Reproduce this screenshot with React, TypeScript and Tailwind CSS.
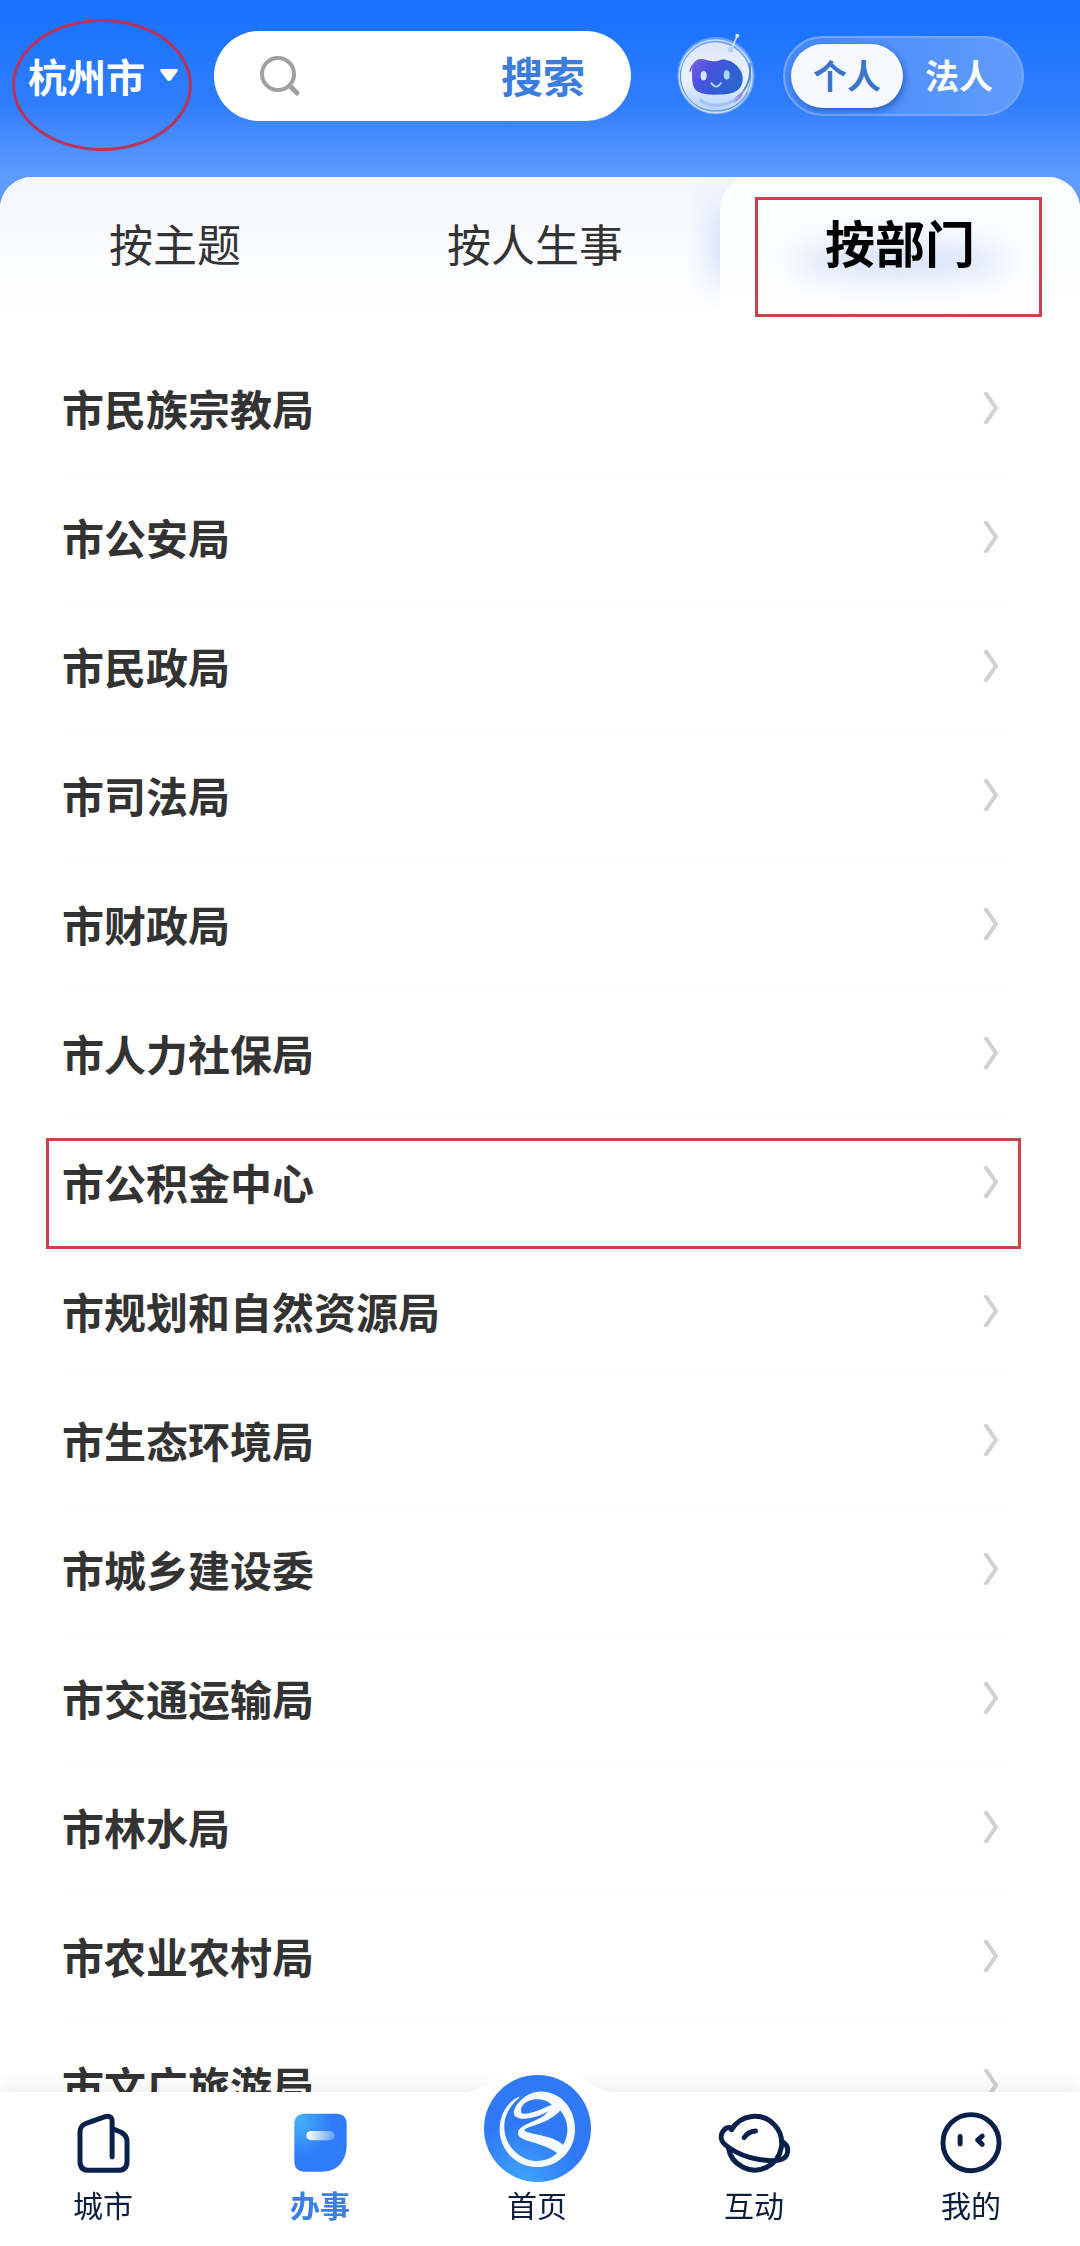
import { useState } from 'react'

const departments = [
    '市民族宗教局',
    '市公安局',
    '市民政局',
    '市司法局',
    '市财政局',
    '市人力社保局',
    '市公积金中心',
    '市规划和自然资源局',
    '市生态环境局',
    '市城乡建设委',
    '市交通运输局',
    '市林水局',
    '市农业农村局',
    '市文广旅游局',
]

const MARKED = '市公积金中心'

const Robot = () => (
    <svg viewBox="50 98 240 250" className="h-[84px] w-20" aria-hidden="true">
        <defs>
            <linearGradient id="shell" x1="0" y1="0" x2="0" y2="1">
                <stop offset="0" stopColor="#dfe6fb" />
                <stop offset="0.55" stopColor="#e9f3ff" />
                <stop offset="1" stopColor="#b4d2fb" />
            </linearGradient>
            <linearGradient id="visor" x1="0" y1="0" x2="1" y2="0.5">
                <stop offset="0" stopColor="#7a5fe0" />
                <stop offset="0.4" stopColor="#4552dd" />
                <stop offset="1" stopColor="#2a66cf" />
            </linearGradient>
        </defs>
        <circle cx="170" cy="228" r="116" fill="#8fb9fb" opacity="0.65" />
        <circle cx="168" cy="232" r="104" fill="url(#shell)" />
        <circle cx="169" cy="230" r="109" fill="none" stroke="#c6defc" strokeWidth="5" />
        <path d="M65 210 C55 270 95 330 165 334 C215 334 250 310 265 280" fill="none" stroke="#5c8fd6" strokeWidth="3" />
        <path d="M271 190 C276 225 270 250 252 275" fill="none" stroke="#4d7fd0" strokeWidth="5" />
        <path d="M222 310 C240 302 252 288 256 268 L232 290 Z" fill="#a58ae8" />
        <path d="M120 300 C150 325 205 322 235 292" fill="none" stroke="#8db5ee" strokeWidth="9" opacity="0.6" />
        <path d="M98 215 C98 180 118 175 140 180 C160 186 170 186 185 180 C215 176 248 205 250 232 C252 262 235 280 200 284 C165 287 125 286 110 272 C98 258 98 240 98 215 Z" fill="url(#visor)" />
        <path d="M92 216 C95 200 104 190 116 186" fill="none" stroke="#7a5fe0" strokeWidth="5" />
        <ellipse cx="133" cy="228" rx="9" ry="14" fill="#d9e8ff" />
        <ellipse cx="202" cy="226" rx="9" ry="14" fill="#a9d8ff" />
        <path d="M156 250 Q170 272 185 250" fill="none" stroke="#bcd9ff" strokeWidth="5" strokeLinecap="round" />
        <path d="M216 148 L233 110" stroke="#cfe0fb" strokeWidth="5" />
        <circle cx="234" cy="108" r="6" fill="#dbe8ff" />
        <circle cx="214" cy="150" r="8" fill="#b9cdf7" />
    </svg>
)

const CityIcon = () => (
    <svg viewBox="226 216 160 184" className="h-[61px] w-[53px]" fill="none" stroke="#08204a" strokeWidth="15" strokeLinecap="round" strokeLinejoin="round" aria-hidden="true">
        <path d="M332 349 V240 C332 228 322 223 311 227 L254 247 C241 252 235 261 235 273 V362 Q235 389 262 389 H350 Q377 389 377 362 V302 C377 286 370 280 359 274 L338 265" />
    </svg>
)

const WorkIcon = () => (
    <svg viewBox="878 216 160 184" className="h-[61px] w-[53px]" aria-hidden="true">
        <defs>
            <radialGradient id="work" cx="0.12" cy="0.15" r="0.6">
                <stop offset="0" stopColor="#43b0f8" />
                <stop offset="1" stopColor="#2f7bfa" />
            </radialGradient>
            <linearGradient id="dash" x1="0" y1="0" x2="1" y2="0">
                <stop offset="0" stopColor="#ffffff" />
                <stop offset="1" stopColor="#ffffff" stopOpacity="0.25" />
            </linearGradient>
        </defs>
        <path d="M911 218 H1006 Q1037 218 1037 249 V310 C1037 360 1010 393 960 393 H911 Q879 393 879 361 V250 Q879 218 911 218 Z" fill="url(#work)" />
        <rect x="915" y="270" width="86" height="28" rx="14" fill="url(#dash)" />
    </svg>
)

const HomeIcon = () => (
    <svg viewBox="250 105 322 322" className="size-[107px] shrink-0" aria-hidden="true">
        <defs>
            <radialGradient id="home" cx="0.35" cy="1" r="0.55">
                <stop offset="0" stopColor="#3fa5fa" />
                <stop offset="1" stopColor="#3079f6" />
            </radialGradient>
        </defs>
        <circle cx="411" cy="266" r="161" fill="url(#home)" />
        <path
            fill="#f4faff"
            fillRule="evenodd"
            d="M356 170 C320 186 297 226 297 268 C297 332 348 382 411 382 C474 382 524 332 524 268 C524 205 480 155 420 155 C375 155 336 200 340 222 C346 244 400 240 442 215 C424 245 354 250 352 280 C354 308 425 304 470 340 C440 370 385 374 346 338 C300 296 296 222 356 174 Z M364 221 C354 200 378 178 410 178 C430 178 448 187 454 195 C432 200 400 224 364 221 Z M480 212 C506 245 507 285 488 315 C455 286 395 286 371 273 C374 258 440 256 480 212 Z"
        />
    </svg>
)

const PlanetIcon = () => (
    <svg viewBox="110 212 220 184" className="h-[61px] w-[73px]" fill="none" stroke="#08204a" strokeWidth="15" strokeLinecap="round" strokeLinejoin="round" aria-hidden="true">
        <path d="M151 262 A81 81 0 1 1 141 316" />
        <path d="M151 262 C152 252 134 253 125 267 C116 280 118 297 133 309 C170 340 235 362 294 354 C326 348 328 312 303 298" />
        <path d="M189 286 Q200 268 223 266" />
    </svg>
)

const FaceIcon = () => (
    <svg viewBox="779 216 188 188" className="size-[62px]" fill="none" stroke="#08204a" strokeWidth="15" strokeLinecap="round" strokeLinejoin="round" aria-hidden="true">
        <circle cx="873" cy="309" r="85" />
        <path d="M840 290 V313 M907 289 L893 301 L907 314" />
    </svg>
)

const navItems = [
    { label: '城市', icon: <CityIcon /> },
    { label: '办事', icon: <WorkIcon /> },
    { label: '首页', icon: <HomeIcon /> },
    { label: '互动', icon: <PlanetIcon /> },
    { label: '我的', icon: <FaceIcon /> },
]

const tabs = ['按主题', '按人生事', '按部门']

const App = () => {
    const [keyword, setKeyword] = useState('')
    const [role, setRole] = useState('个人')
    const [tab, setTab] = useState('按部门')

    return (
        <div className="min-h-screen overflow-x-hidden bg-white font-['Noto_Sans_CJK_SC',sans-serif] text-[#333]">
            <header className="flex h-[205px] items-start bg-linear-to-b from-[#1a73ff] from-10% via-[#2f7dfd] via-50% to-[#609cff] to-88% pt-[31px] pl-7">
                <button className="relative flex h-[90px] w-[186px] shrink-0 items-center gap-[14px] pb-[2px] text-[39px] leading-none font-bold text-white">
                    杭州市
                    <svg viewBox="0 0 20 14" className="h-[14px] w-5" aria-hidden="true">
                        <path d="M3 1 H17 Q20 1 18 4 L12 12 Q10 14 8 12 L2 4 Q0 1 3 1 Z" fill="#fff" />
                    </svg>
                    <span className="absolute -top-3 -left-4 h-[132px] w-[180px] rounded-[50%] border-3 border-[#b8325c]"></span>
                </button>

                <form className="flex h-[90px] min-w-0 flex-1 items-center rounded-full bg-white pr-[46px] pl-[45px]" onSubmit={(e) => e.preventDefault()}>
                    <svg viewBox="0 0 42 42" className="size-[42px] shrink-0" fill="none" stroke="#a0a0a0" strokeWidth="4" strokeLinecap="round" aria-hidden="true">
                        <circle cx="19" cy="19" r="16" />
                        <path d="M31 31 L38 38" strokeWidth="5" />
                    </svg>
                    <input type="text" aria-label="搜索" value={keyword} onChange={(e) => setKeyword(e.target.value)} className="mx-4 min-w-0 flex-1 text-[36px] outline-none" />
                    <button type="submit" className="shrink-0 pb-[2px] text-[42px] leading-none font-bold text-[#3b7cdc]">搜索</button>
                </form>

                <button className="mt-[1px] ml-[45px] shrink-0" aria-label="智能客服">
                    <Robot />
                </button>

                <div className="mt-[5px] mr-14 ml-[27px] flex h-20 w-[241px] shrink-0 items-center rounded-full border-2 border-[#74a7fc] bg-linear-to-r from-[#4488fb] to-[#609cfa] pl-[6px]">
                    {['个人', '法人'].map((r) => (
                        <button
                            key={r}
                            onClick={() => setRole(r)}
                            className={role === r
                                ? 'h-16 w-[112px] rounded-full bg-[#f5f8ff] pb-[2px] text-[34px] leading-none font-bold text-[#3b74c8] shadow-[2px_3px_6px_#2b62c4]'
                                : 'h-16 w-[112px] pb-[2px] text-[34px] leading-none font-bold text-white'}
                        >
                            {r}
                        </button>
                    ))}
                </div>
            </header>

            <main className="relative -mt-7 overflow-hidden rounded-t-[32px] bg-white">
                <div className="bg-linear-to-b from-[#f3f7fe] to-white to-80% pb-9">
                    <div role="tablist" className="grid grid-cols-[35fr_37fr_36fr]">
                        {tabs.map((t) => (
                            <button
                                key={t}
                                role="tab"
                                aria-selected={tab === t}
                                onClick={() => setTab(t)}
                                className={tab === t
                                    ? 'relative h-[131px] pb-[4px] text-[50px] leading-none font-bold text-black'
                                    : 'h-[131px] text-[44px] leading-none'}
                            >
                                {tab === t && (
                                    <>
                                        <span className="absolute inset-y-0 -left-8 w-16 bg-linear-to-l from-[#d9e4fa] from-40% to-transparent mask-y-from-60%"></span>
                                        <span className="absolute inset-0 rounded-t-[32px] bg-linear-to-b from-[#fafdff] to-white"></span>
                                        <span className="absolute top-[68px] left-1/2 h-8 w-[220px] -translate-x-1/2 rounded-[50%] bg-[#cfdcf8] blur-lg"></span>
                                    </>
                                )}
                                <span className="relative">{t}</span>
                                {t === '按部门' && <span className="absolute top-5 right-[38px] left-[35px] h-[120px] border-3 border-[#c8434a]"></span>}
                            </button>
                        ))}
                    </div>
                </div>

                <ul>
                    {departments.map((name) => (
                        <li key={name} className="relative mr-[72px] ml-[62px] border-b border-[#fcfcfc]">
                            <a href="#" className="flex h-32 items-center justify-between pr-[8px] text-[42px] leading-none font-bold">
                                {name}
                                <svg viewBox="0 0 18 32" className="h-8 w-[18px]" fill="none" stroke="#cdd2d4" strokeWidth="4" aria-hidden="true">
                                    <path d="M3 0 L14 16 L3 32" />
                                </svg>
                            </a>
                            {name === MARKED && <span className="absolute top-[20px] -right-[13px] -left-4 h-[111px] border-3 border-[#c8434a]"></span>}
                        </li>
                    ))}
                </ul>
            </main>

            <nav className="fixed inset-x-0 bottom-0 bg-white shadow-[0_-4px_20px_rgba(0,0,0,0.08)]">
                <svg viewBox="0 0 180 40" className="absolute -top-[29px] left-1/2 h-10 w-[180px] -translate-x-1/2" aria-hidden="true">
                    <path d="M0 30 C30 30 34 22 46 14 C60 4 74 0 88 0 C102 0 116 4 130 14 C142 22 150 30 180 30 V40 H0 Z" fill="#fff" />
                </svg>
                <ul className="relative flex justify-between pr-[71px] pl-[65px]">
                    {navItems.map((item) => (
                        <li key={item.label} className="w-[76px]">
                            <a href="#" className={item.label === '办事' ? 'flex h-[154px] flex-col items-center justify-end pb-[27px] text-[#3b7fe6]' : 'flex h-[154px] flex-col items-center justify-end pb-[27px] text-[#0b1d3c]'}>
                                <span className={item.label === '首页' ? 'flex justify-center pb-[7px]' : 'flex justify-center pb-[15px]'}>{item.icon}</span>
                                <span className={item.label === '办事' ? 'text-[30px] leading-[30px] font-bold' : 'text-[30px] leading-[30px]'}>{item.label}</span>
                            </a>
                        </li>
                    ))}
                </ul>
            </nav>
        </div>
    );
}

export default App;
